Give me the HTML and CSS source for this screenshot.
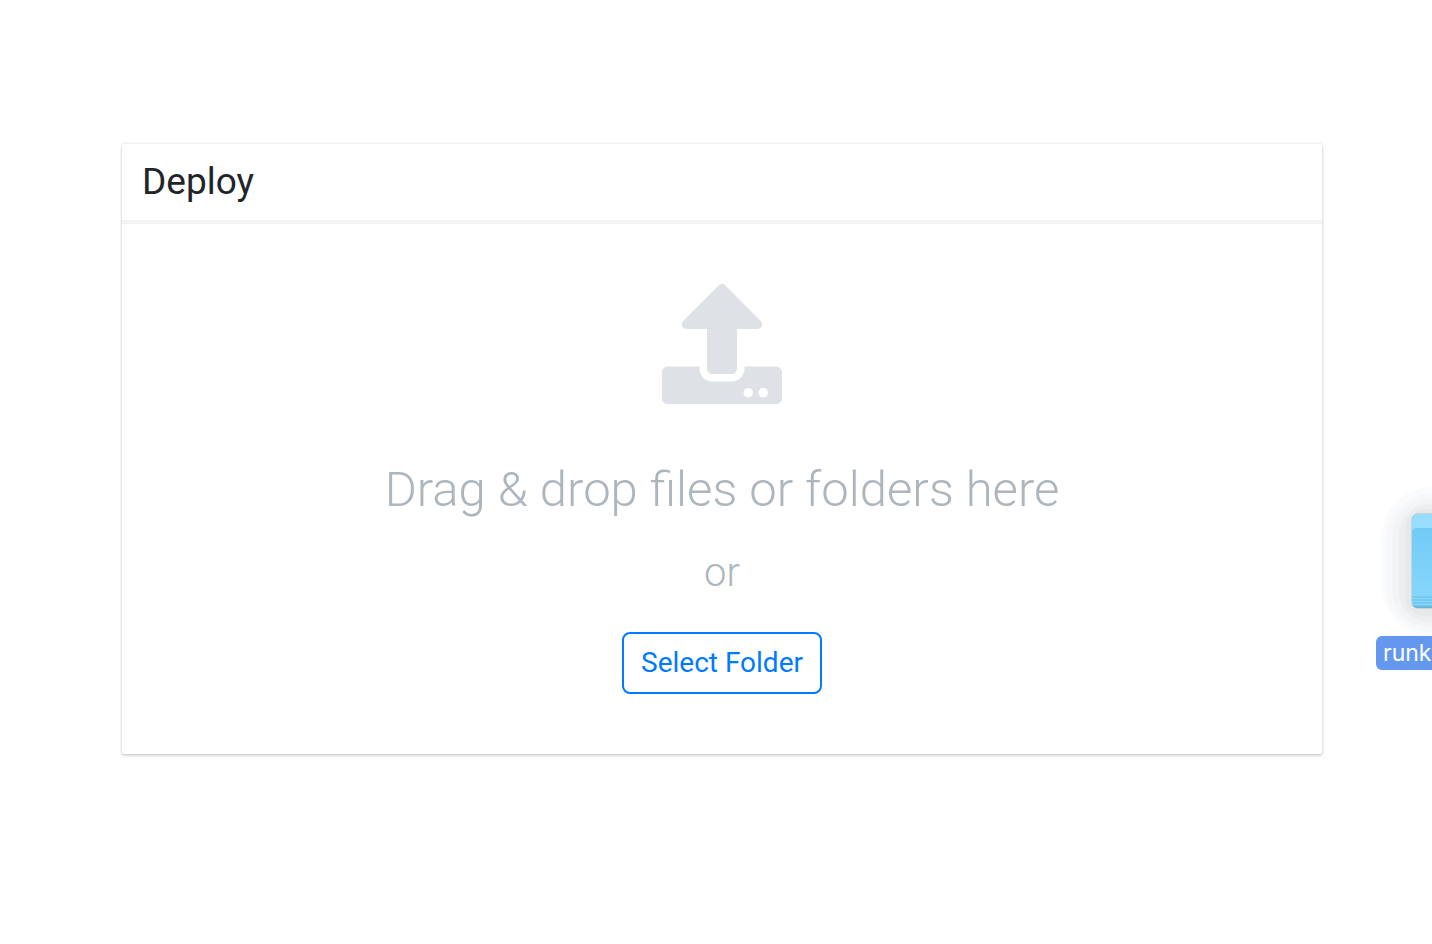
FILE: index.html
```html
<!DOCTYPE html>
<html lang="en">
<head>
    <meta charset="UTF-8">
    <meta name="viewport" content="width=device-width, initial-scale=1.0">
    <title>Deploy</title>

    <link rel="stylesheet" href="styles.css">
</head>
<body>
<main class="card">
    <header class="card-header">
        <h1>Deploy</h1>
    </header>
    <div class="drop-zone">
        <svg class="upload-icon" viewBox="0 0 512 512" aria-hidden="true">
            <path d="M296 384h-80c-13.3 0-24-10.7-24-24V192h-87.7c-17.8 0-26.7-21.5-14.1-34.1L242.3 5.7c7.5-7.5 19.8-7.5 27.3 0l152.2 152.2c12.6 12.6 3.7 34.1-14.1 34.1H320v168c0 13.3-10.7 24-24 24zm216-8v112c0 13.3-10.7 24-24 24H24c-13.3 0-24-10.7-24-24V376c0-13.3 10.7-24 24-24h136v8c0 30.9 25.1 56 56 56h80c30.9 0 56-25.1 56-56v-8h136c13.3 0 24 10.7 24 24zm-124 88c0-11-9-20-20-20s-20 9-20 20 9 20 20 20 20-9 20-20zm64 0c0-11-9-20-20-20s-20 9-20 20 9 20 20 20 20-9 20-20z"/>
        </svg>
        <p class="drop-title">Drag &amp; drop files or folders here</p>
        <p class="drop-or">or</p>
        <button type="button" class="btn-outline">Select Folder</button>
    </div>
</main>

<!-- Folder being dragged in from the desktop -->
<div class="desktop-folder">
    <svg class="folder-icon" viewBox="0 0 56 154" aria-hidden="true">
        <defs>
            <linearGradient id="front" x1="0" y1="0" x2="0" y2="1">
                <stop offset="0" stop-color="#72cbf6"/>
                <stop offset="1" stop-color="#88d8fc"/>
            </linearGradient>
        </defs>
        <rect x="6" y="5" width="100" height="149" rx="50" fill="#fafbfc"/>
        <rect x="10" y="12" width="100" height="138" rx="46" fill="#f6f8f9"/>
        <rect x="16" y="17" width="100" height="128" rx="38" fill="#f2f4f5"/>
        <rect x="23" y="22" width="100" height="118" rx="30" fill="#eceeef"/>
        <rect x="29" y="27" width="100" height="107" rx="20" fill="#e6e8e9"/>
        <rect x="35" y="31" width="100" height="96" rx="8" fill="#cbd3d8"/>
        <path d="M36 39q0-7 7-7h13v94H42q-6 0-6-6z" fill="#6fb4d6"/>
        <path d="M36 39q0-7 7-7h13v30H36z" fill="#98dcff"/>
        <path d="M36 51q0-5 5-5h15v78H40q-4 0-4-4z" fill="url(#front)"/>
        <path d="M36 115h20M36 118h20M37 121h19M38 124h18" stroke="#64bce7" fill="none"/>
    </svg>
    <span class="folder-name">runk</span>
</div>
</body>
</html>
```
FILE: styles.css
```css
* {
    box-sizing: border-box;
}
body {
    position: relative;
    min-height: 100vh;
    margin: 0;
    padding: 144px 110px 144px 122px;
    background-color: #fff;
    color: #212529;
    font-family: Roboto, "Liberation Sans", sans-serif;
}
.card {
    border-radius: 2px;
    background-color: #fff;
    box-shadow: 0 0 2px 1px rgba(33, 37, 41, 0.08), 0 2px 3px rgba(33, 37, 41, 0.16);
}
.card-header {
    padding: 16px 20px;
    border-bottom: 4px solid #f1f3f5;
}
h1 {
    margin: 0;
    font-size: 37px;
    font-weight: 400;
    line-height: 44px;
}
.drop-zone {
    display: flex;
    flex-direction: column;
    align-items: center;
    padding: 60px;
    color: #adb5bd;
    font-weight: 300;
}
.upload-icon {
    width: 120px;
    height: 120px;
    fill: #dee2e6;
}
p {
    margin: 0;
}
.drop-title {
    margin-top: 50px;
    font-size: 49px;
    line-height: 72px;
}
.drop-or {
    margin-top: 16px;
    font-size: 40px;
    line-height: 62px;
}
.btn-outline {
    margin-top: 28px;
    padding: 8px 17px;
    border: 2px solid #007bff;
    border-radius: 8px;
    background-color: #fff;
    color: #007bff;
    font-family: inherit;
    font-size: 28px;
    line-height: 42px;
    cursor: pointer;
}
.desktop-folder {
    position: absolute;
    top: 482px;
    right: 0;
    width: 56px;
}
.folder-icon {
    display: block;
    width: 56px;
    height: 154px;
}
.folder-name {
    display: block;
    padding-left: 7px;
    border-radius: 6px 0 0 6px;
    background-color: #6398ee;
    color: #fff;
    font-family: Inter, sans-serif;
    font-size: 23px;
    line-height: 34px;
}
```
